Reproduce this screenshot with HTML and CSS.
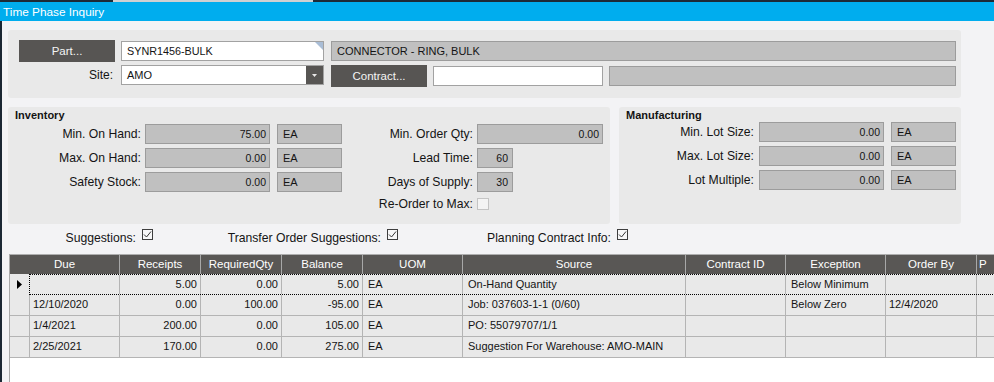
FILE: index.html
```html
<!DOCTYPE html>
<html>
<head>
<meta charset="utf-8">
<link rel="stylesheet" href="styles.css">
</head>
<body>
<div class="topstrip"><span class="s1"></span><span class="s2"></span><span class="s3"></span></div>
<div class="titlebar">Time Phase Inquiry</div>
<div class="window">
  <div class="panel head">
    <div class="row">
      <button class="btn">Part...</button>
      <div class="field white part"><span>SYNR1456-BULK</span><svg class="corner" width="8" height="8" viewBox="0 0 8 8"><polygon points="0,0 8,0 8,8" fill="#a9bdd6"/></svg></div>
      <div class="field ro desc">CONNECTOR - RING, BULK</div>
    </div>
    <div class="row r2">
      <div class="site">Site:</div>
      <div class="field white combo"><span class="txt">AMO</span><span class="drop"><svg width="5" height="3" viewBox="0 0 5 3"><polygon points="0,0 5,0 2.5,3" fill="#e8e8e8"/></svg></span></div>
      <button class="btn contract">Contract...</button>
      <div class="field white cfield"></div>
      <div class="field ro cdesc"></div>
    </div>
  </div>

  <div class="groups">
    <div class="panel inv">
      <div class="gtitle">Inventory</div>
      <div class="gbody">
        <div class="col c1">
          <div class="frow"><div class="lbl">Min. On Hand:</div><div class="field ro num">75.00</div><div class="field ro uom">EA</div></div>
          <div class="frow"><div class="lbl">Max. On Hand:</div><div class="field ro num">0.00</div><div class="field ro uom">EA</div></div>
          <div class="frow"><div class="lbl">Safety Stock:</div><div class="field ro num">0.00</div><div class="field ro uom">EA</div></div>
        </div>
        <div class="col c2">
          <div class="frow"><div class="lbl">Min. Order Qty:</div><div class="field ro num">0.00</div></div>
          <div class="frow"><div class="lbl">Lead Time:</div><div class="field ro num short">60</div></div>
          <div class="frow"><div class="lbl">Days of Supply:</div><div class="field ro num short">30</div></div>
          <div class="frow reorder"><div class="lbl">Re-Order to Max:</div><div class="cb"></div></div>
        </div>
      </div>
    </div>
    <div class="panel mfg">
      <div class="gtitle">Manufacturing</div>
      <div class="col">
        <div class="frow"><div class="lbl">Min. Lot Size:</div><div class="field ro num">0.00</div><div class="field ro uom">EA</div></div>
        <div class="frow"><div class="lbl">Max. Lot Size:</div><div class="field ro num">0.00</div><div class="field ro uom">EA</div></div>
        <div class="frow"><div class="lbl">Lot Multiple:</div><div class="field ro num">0.00</div><div class="field ro uom">EA</div></div>
      </div>
    </div>
  </div>

  <div class="checks">
    <div class="chk k1"><span>Suggestions:</span><div class="box"><svg width="9" height="9" viewBox="0 0 9 9"><polyline points="1,4.5 3.5,7 8,1.5" fill="none" stroke="#333" stroke-width="1"/></svg></div></div>
    <div class="chk k2"><span>Transfer Order Suggestions:</span><div class="box"><svg width="9" height="9" viewBox="0 0 9 9"><polyline points="1,4.5 3.5,7 8,1.5" fill="none" stroke="#333" stroke-width="1"/></svg></div></div>
    <div class="chk k3"><span>Planning Contract Info:</span><div class="box"><svg width="9" height="9" viewBox="0 0 9 9"><polyline points="1,4.5 3.5,7 8,1.5" fill="none" stroke="#333" stroke-width="1"/></svg></div></div>
  </div>

  <div class="grid">
    <div class="gt">
      <div class="hrow">
        <div>Due</div><div>Receipts</div><div>RequiredQty</div><div>Balance</div><div>UOM</div><div>Source</div><div>Contract ID</div><div>Exception</div><div>Order By</div><div class="hl">P</div>
      </div>
      <div class="drow focus">
        <div class="rh"><svg width="5" height="9" viewBox="0 0 5 9"><polygon points="0,0 5,4.5 0,9" fill="#000"/></svg></div>
        <div class="fbox">
          <div class="t d"></div><div class="n">5.00</div><div class="n">0.00</div><div class="n">5.00</div><div class="t">EA</div><div class="t">On-Hand Quantity</div><div class="t"></div><div class="t">Below Minimum</div><div class="t d"></div><div class="t"></div>
        </div>
      </div>
      <div class="drow">
        <div class="rh"></div><div class="t d">12/10/2020</div><div class="n">0.00</div><div class="n">100.00</div><div class="n">-95.00</div><div class="t">EA</div><div class="t">Job: 037603-1-1 (0/60)</div><div class="t"></div><div class="t">Below Zero</div><div class="t d">12/4/2020</div><div class="t"></div>
      </div>
      <div class="drow">
        <div class="rh"></div><div class="t d">1/4/2021</div><div class="n">200.00</div><div class="n">0.00</div><div class="n">105.00</div><div class="t">EA</div><div class="t">PO: 55079707/1/1</div><div class="t"></div><div class="t"></div><div class="t d"></div><div class="t"></div>
      </div>
      <div class="drow">
        <div class="rh"></div><div class="t d">2/25/2021</div><div class="n">170.00</div><div class="n">0.00</div><div class="n">275.00</div><div class="t">EA</div><div class="t">Suggestion For Warehouse: AMO-MAIN</div><div class="t"></div><div class="t"></div><div class="t d"></div><div class="t"></div>
      </div>
    </div>
  </div>
</div>
</body>
</html>
```

FILE: styles.css
```css
* { box-sizing: border-box; }
body {
  margin: 0;
  width: 994px;
  height: 382px;
  overflow: hidden;
  background: #f3f3f5;
  font-family: "Liberation Sans", Arial, sans-serif;
  color: #141414;
}
.topstrip { display: flex; height: 2px; }
.topstrip .s1 { width: 113px; background: #1d2a36; }
.topstrip .s2 { width: 200px; background: #cfd0d2; }
.topstrip .s3 { flex: 1; background: #1d2a36; }
.titlebar {
  height: 19px;
  background: #00adee;
  color: #fff;
  font-size: 11.8px;
  line-height: 20px;
  padding-left: 3px;
}
.window {
  height: 361px;
  border-left: 2px solid #1b2733;
  padding: 9px 0 0 6px;
  overflow: hidden;
}
.panel { background: #e9e9e9; border-radius: 3px; }
.head { width: 953px; height: 68px; padding: 10px 0 0 11px; }
.row { display: flex; align-items: flex-start; }
.r2 { margin-top: 3px; }
.btn {
  width: 96px;
  height: 22px;
  background: #575553;
  color: #f4f4f4;
  border: 0;
  padding: 0;
  font-family: "Liberation Sans", Arial, sans-serif;
  font-size: 11.5px;
}
.field {
  height: 20px;
  border: 1px solid #a2a2a2;
  font-size: 11px;
  line-height: 18px;
  padding: 0 5px;
  white-space: nowrap;
  overflow: hidden;
}
.white { background: #fff; }
.ro { background: #c0c0c0; border-color: #9c9c9c; }
.part {
  margin: 1px 0 0 6px;
  width: 203px;
  display: flex;
  justify-content: space-between;
  align-items: flex-start;
  padding-right: 0;
  font-size: 10.8px;
}
.corner { display: block; }
.desc { margin: 1px 0 0 7px; width: 625px; }
.site {
  width: 96px;
  text-align: right;
  padding-right: 2px;
  font-size: 12px;
  line-height: 20px;
}
.combo {
  margin-left: 6px;
  width: 203px;
  display: flex;
  padding: 0 0 0 5px;
}
.combo .txt { flex: 1; }
.drop {
  width: 17px;
  height: 18px;
  background: #575553;
  display: flex;
  align-items: center;
  justify-content: center;
}
.drop svg { display: block; }
.btn.contract { margin-left: 7px; }
.cfield { margin: 1px 0 0 6px; width: 170px; }
.cdesc { margin: 1px 0 0 6px; width: 347px; }

.groups { display: flex; gap: 9px; margin-top: 9px; }
.inv { width: 602px; height: 117px; }
.mfg { width: 342px; height: 117px; }
.gtitle {
  font-weight: bold;
  font-size: 11px;
  line-height: 13px;
  padding: 2px 0 0 7px;
  height: 17px;
}
.mfg .gtitle { height: 15px; }
.gbody { display: flex; }
.col { display: flex; flex-direction: column; gap: 4px; }
.frow { display: flex; height: 20px; align-items: center; }
.lbl {
  font-size: 12.2px;
  text-align: right;
  padding-right: 4px;
  white-space: nowrap;
  line-height: 20px;
}
.c1 .lbl { width: 137px; }
.c2 .lbl { width: 135px; }
.mfg .lbl { width: 140px; padding-right: 5px; }
.num { width: 125px; text-align: right; padding-right: 3px; font-size: 10.5px; }
.c2 .num { width: 126px; }
.c2 .num.short { width: 36px; padding-right: 4px; }
.uom { width: 65px; margin-left: 7px; }
.reorder { margin-top: -2px; }
.cb { width: 12px; height: 12px; border: 1px solid #c4c4c4; background: #f4f4f4; }

.checks { display: flex; height: 30px; padding-top: 5px; align-items: flex-start; }
.chk { display: flex; align-items: flex-start; }
.chk span {
  font-size: 12.2px;
  line-height: 14px;
  padding-top: 2px;
  text-align: right;
  white-space: nowrap;
}
.k1 { margin-left: 56px; }
.k1 span { width: 72px; }
.k2 { margin-left: 74px; }
.k2 span { width: 154px; }
.k3 { margin-left: 89px; }
.k3 span { width: 124px; }
.box {
  width: 11px;
  height: 11px;
  margin-left: 6px;
  border: 1px solid #3e3e3e;
  background: #f7f7f8;
  display: flex;
  align-items: center;
  justify-content: center;
}
.box svg { display: block; }

.grid {
  margin-left: 1px;
  width: 985px;
  height: 128px;
  background: #fff;
  border-left: 1px solid #a9a9a9;
  overflow: hidden;
}
.gt { width: 1067px; }
.hrow {
  display: grid;
  grid-template-columns: 110px 81px 81px 81px 100px 223px 100px 100px 91px 100px;
  height: 20px;
  background: #595755;
  border-top: 1px solid #aeaeae;
}
.hrow > div {
  border-right: 1px solid #a8a8a8;
  color: #fff;
  text-align: center;
  font-size: 11.5px;
  line-height: 19px;
  white-space: nowrap;
  overflow: hidden;
}
.hrow > .hl { text-align: left; padding-left: 2px; }
.drow {
  display: grid;
  grid-template-columns: 20px 90px 81px 81px 81px 100px 223px 100px 100px 91px 100px;
  height: 21px;
  background: #e9e9e9;
  border-bottom: 1px solid #b4b4b4;
}
.drow > div, .fbox > div {
  border-right: 1px solid #b4b4b4;
  font-size: 11px;
  line-height: 19px;
  padding: 0 5px;
  white-space: nowrap;
  overflow: hidden;
}
.drow .n, .fbox .n { text-align: right; padding-right: 3px; }
.drow .d, .fbox .d { padding-left: 3px; }
.drow.focus { display: flex; border-bottom: 0; }
.drow.focus > .rh {
  width: 19px;
  flex: none;
  border-right: 0;
  padding: 0 0 0 7px;
  display: flex;
  align-items: center;
}
.rh svg { display: block; }
.drow > .fbox {
  flex: none;
  width: 1048px;
  height: 21px;
  padding: 0;
  display: grid;
  grid-template-columns: 90px 81px 81px 81px 100px 223px 100px 100px 91px 100px;
  border-top: 1px dotted #000;
  border-bottom: 1px dotted #000;
  border-left: 1px dotted #000;
  border-right: 0;
}
.fbox > div { line-height: 18px; }
```
